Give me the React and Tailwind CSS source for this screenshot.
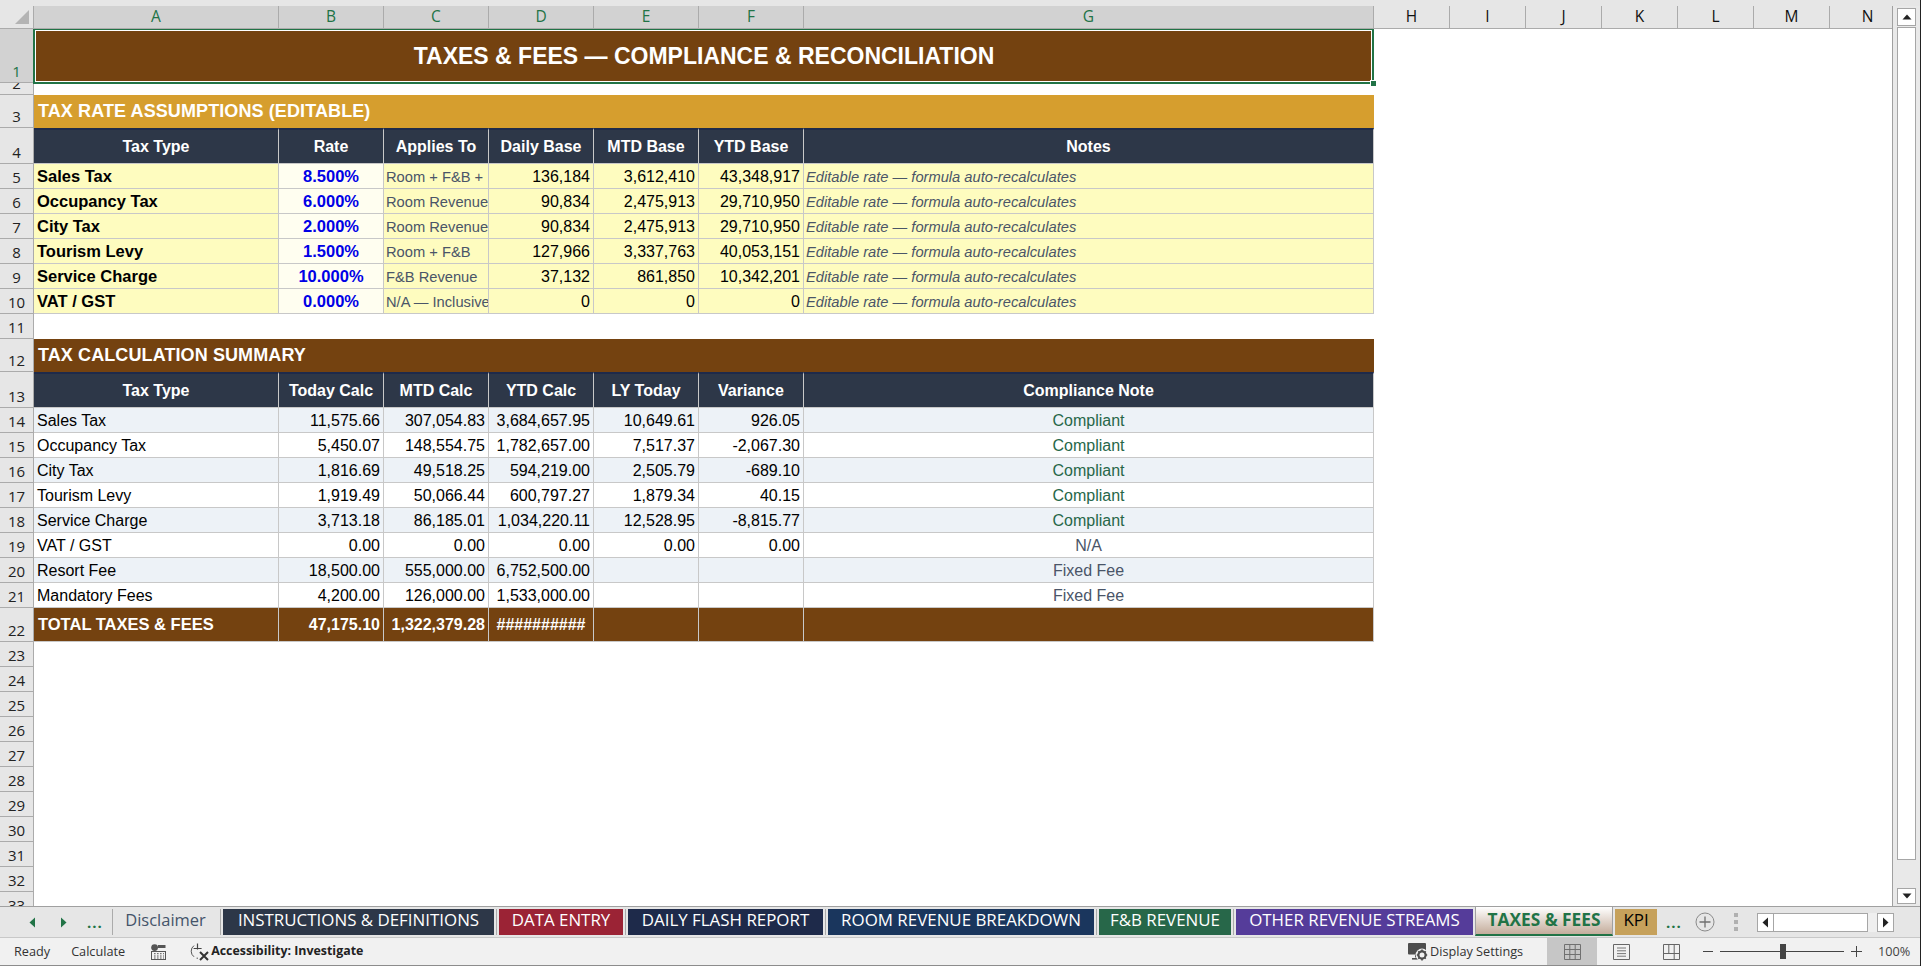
const hCols = ["H", "I", "J", "K", "L", "M", "N"]

const rates = [
  ["Sales Tax", "8.500%", "Room + F&B +", "136,184", "3,612,410", "43,348,917"],
  ["Occupancy Tax", "6.000%", "Room Revenue", "90,834", "2,475,913", "29,710,950"],
  ["City Tax", "2.000%", "Room Revenue", "90,834", "2,475,913", "29,710,950"],
  ["Tourism Levy", "1.500%", "Room + F&B", "127,966", "3,337,763", "40,053,151"],
  ["Service Charge", "10.000%", "F&B Revenue", "37,132", "861,850", "10,342,201"],
  ["VAT / GST", "0.000%", "N/A — Inclusive", "0", "0", "0"],
]

const calcs = [
  ["Sales Tax", "11,575.66", "307,054.83", "3,684,657.95", "10,649.61", "926.05", "Compliant"],
  ["Occupancy Tax", "5,450.07", "148,554.75", "1,782,657.00", "7,517.37", "-2,067.30", "Compliant"],
  ["City Tax", "1,816.69", "49,518.25", "594,219.00", "2,505.79", "-689.10", "Compliant"],
  ["Tourism Levy", "1,919.49", "50,066.44", "600,797.27", "1,879.34", "40.15", "Compliant"],
  ["Service Charge", "3,713.18", "86,185.01", "1,034,220.11", "12,528.95", "-8,815.77", "Compliant"],
  ["VAT / GST", "0.00", "0.00", "0.00", "0.00", "0.00", "N/A"],
  ["Resort Fee", "18,500.00", "555,000.00", "6,752,500.00", "", "", "Fixed Fee"],
  ["Mandatory Fees", "4,200.00", "126,000.00", "1,533,000.00", "", "", "Fixed Fee"],
]

const tabs = [
  ["INSTRUCTIONS & DEFINITIONS", "w-[271px] bg-[#2d3748] text-white"],
  ["DATA ENTRY", "w-[124px] bg-[#9b2335] text-white"],
  ["DAILY FLASH REPORT", "w-[195px] bg-[#1e2a4a] text-white"],
  ["ROOM REVENUE BREAKDOWN", "w-[266px] bg-[#1a365d] text-white"],
  ["F&B REVENUE", "w-[132px] bg-[#276749] text-white"],
  ["OTHER REVENUE STREAMS", "w-[237px] bg-[#553c9a] text-white"],
]

const RowNum = ({ n, active }) => (
  <div className={`w-[34px] shrink-0 h-full flex items-end justify-center overflow-hidden border-b border-r border-[#ababab] pb-[2px] text-[15px] leading-[18px] font-['Open_Sans',sans-serif] ${active ? "bg-[#d2d2d2] text-[#217346]" : "bg-[#e6e6e6] text-[#222]"}`}>
    {n}
  </div>
)

const ColA = "w-[245px]"
const ColN = "w-[105px]"
const ColG = "w-[570px]"

const Cell = ({ w, className = "", children }) => (
  <div className={`${w} shrink-0 h-full flex items-center overflow-hidden whitespace-nowrap border-r border-b border-[#c8c8c8] ${className}`}>
    {children}
  </div>
)

const Band = ({ n, h, bg, children }) => (
  <div className={`flex shrink-0 ${h}`}>
    <RowNum n={n} />
    <div className={`w-[1340px] flex items-center pl-[4px] ${bg} text-white font-bold text-[18px] tracking-[0.1px]`}>{children}</div>
  </div>
)

const HeadRow = ({ n, labels }) => (
  <div className="flex shrink-0 h-[36px]">
    <RowNum n={n} />
    {labels.map((l, i) => (
      <Cell key={l} w={i === 0 ? ColA : i === 6 ? ColG : ColN} className="justify-center bg-[#2d3748] text-white font-bold text-[16px] border-t-2 border-t-[#1e2a4a]">
        {l}
      </Cell>
    ))}
  </div>
)

const RateRow = ({ n, row }) => (
  <div className="flex shrink-0 h-[25px]">
    <RowNum n={n} />
    <Cell w={ColA} className="bg-[#fefcbf] pl-[3px] pt-[1px] font-bold text-[16.5px] text-black">{row[0]}</Cell>
    <Cell w={ColN} className="bg-[#fffef0] justify-center font-bold text-[16.5px] text-[#0000e6]">{row[1]}</Cell>
    <Cell w={ColN} className="bg-[#fefcbf] pl-[2px] pt-[2px] text-[14.7px] text-[#4a5568]">{row[2]}</Cell>
    {row.slice(3).map((v, i) => (
      <Cell key={i} w={ColN} className="bg-[#fefcbf] justify-end pr-[3px] pt-[1px] text-[16px] text-black">{v}</Cell>
    ))}
    <Cell w={ColG} className="bg-[#fefcbf] pl-[2px] pt-[2px] italic text-[14.7px] text-[#4a5568]">Editable rate — formula auto-recalculates</Cell>
  </div>
)

const CalcRow = ({ n, row }) => {
  const bg = n % 2 === 0 ? "bg-[#edf2f7]" : "bg-white"
  return (
    <div className="flex shrink-0 h-[25px]">
      <RowNum n={n} />
      <Cell w={ColA} className={`${bg} pl-[3px] pt-[2px] text-[16px] text-black`}>{row[0]}</Cell>
      {row.slice(1, 6).map((v, i) => (
        <Cell key={i} w={ColN} className={`${bg} justify-end pr-[3px] pt-[2px] text-[16px] text-black`}>{v}</Cell>
      ))}
      <Cell w={ColG} className={`${bg} justify-center pt-[2px] text-[16px] ${row[6] === "Compliant" ? "text-[#276749]" : "text-[#4a5568]"}`}>{row[6]}</Cell>
    </div>
  )
}

const TotalRow = () => (
  <div className="flex shrink-0 h-[34px]">
    <RowNum n={22} />
    <Cell w={ColA} className="bg-[#744210] pl-[4px] font-bold text-[16.5px] text-white">TOTAL TAXES &amp; FEES</Cell>
    <Cell w={ColN} className="bg-[#744210] justify-end pr-[3px] font-bold text-[16px] text-white">47,175.10</Cell>
    <Cell w={ColN} className="bg-[#744210] justify-end pr-[3px] font-bold text-[16px] text-white">1,322,379.28</Cell>
    <Cell w={ColN} className="bg-[#744210] justify-center font-bold text-[16px] text-white">##########</Cell>
    <Cell w={ColN} className="bg-[#744210]" />
    <Cell w={ColN} className="bg-[#744210]" />
    <Cell w={ColG} className="bg-[#744210]" />
  </div>
)

const EmptyRow = ({ n }) => (
  <div className="flex h-[25px] shrink-0">
    <RowNum n={n} />
  </div>
)

const ColHead = ({ w, label, active }) => (
  <div className={`${w} shrink-0 flex items-center justify-center border-r border-b border-[#ababab] text-[15.5px] font-['Open_Sans',sans-serif] ${active ? "bg-[#d2d2d2] text-[#217346]" : "bg-[#e6e6e6] text-[#111]"}`}>
    {label}
  </div>
)

const Tri = ({ dir, className = "" }) => (
  <svg width="7" height="11" viewBox="0 0 7 11" className={className}>
    <path d={dir === "l" ? "M6 0.5 L6 10.5 L0.5 5.5 Z" : "M1 0.5 L1 10.5 L6.5 5.5 Z"} fill="currentColor" />
  </svg>
)

const ScrollBtn = ({ children, className = "" }) => (
  <div className={`bg-white border border-[#a6a6a6] flex items-center justify-center text-[#222] ${className}`}>{children}</div>
)

const TabSep = () => (
  <div className="w-[5px] shrink-0 flex justify-center h-full">
    <div className="w-[1px] h-full bg-[#ababab]" />
  </div>
)

const MacroIcon = () => (
  <svg width="15" height="16" viewBox="0 0 15 16" className="block shrink-0">
    <circle cx="3.6" cy="3.6" r="3.4" fill="#555" />
    <rect x="7" y="1" width="7.5" height="3" fill="#555" />
    <rect x="0.5" y="7.5" width="14" height="8" fill="none" stroke="#555" />
    <path d="M3 9.7h1.6M6 9.7h1.6M9 9.7h1.6M12 9.7h1M3 12h1.6M6 12h1.6M9 12h1.6M12 12h1M3 14h1.6M6 14h1.6M9 14h1.6M12 14h1" stroke="#555" />
  </svg>
)

const A11yIcon = () => (
  <svg width="20" height="18" viewBox="0 0 20 18" className="block shrink-0">
    <path d="M5 2.6 A7 7 0 0 0 5 13.8" fill="none" stroke="#555" strokeWidth="1" />
    <path d="M9 15.2h-1.4" stroke="#555" />
    <path d="M8.5 0.5v6M4.6 5.5h8" stroke="#444" strokeWidth="1.2" fill="none" />
    <path d="M11 9 L19 17 M19 9 L11 17" stroke="#333" strokeWidth="2" />
  </svg>
)

const DisplayIcon = () => (
  <svg width="21" height="18" viewBox="0 0 21 18" className="block shrink-0">
    <rect x="0" y="0" width="18" height="11.5" rx="1" fill="#4d4d4d" />
    <path d="M7 11.5h3v3H7z" fill="#4d4d4d" />
    <path d="M4 15h6v1.6H4z" fill="#4d4d4d" />
    <circle cx="14" cy="12" r="6.4" fill="#f1f1f1" />
    <circle cx="14" cy="12" r="3.6" fill="none" stroke="#4d4d4d" strokeWidth="2.2" />
    <path d="M14 6.6v2M14 15.4v2M8.8 12h2M17.2 12h2M10.3 8.3l1.4 1.4M16.3 14.3l1.4 1.4M17.7 8.3l-1.4 1.4M11.7 14.3l-1.4 1.4" stroke="#4d4d4d" strokeWidth="1.6" />
  </svg>
)

export default function App() {
  return (
    <div className="w-[1921px] h-[966px] overflow-hidden flex flex-col bg-[#e6e6e6] font-['Liberation_Sans',Arial,sans-serif] border-r border-r-[#222]">
      <div className="h-[6px] shrink-0 bg-[#e6e6e6]" />

      <div className="flex h-[900px] shrink-0">
        <div className="w-[1893px] shrink-0 flex flex-col border-r border-[#a0a0a0]">
          <div className="flex h-[23px] shrink-0 bg-[#e6e6e6] overflow-hidden">
            <div className="w-[34px] shrink-0 flex items-end justify-end p-[3px] border-r border-b border-[#ababab]">
              <svg width="16" height="16" viewBox="0 0 16 16"><path d="M15 1 V15 H1 Z" fill="#b4b4b4" /></svg>
            </div>
            <ColHead w={ColA} label="A" active />
            {["B", "C", "D", "E", "F"].map((c) => <ColHead key={c} w={ColN} label={c} active />)}
            <ColHead w={ColG} label="G" active />
            {hCols.map((c) => <ColHead key={c} w="w-[76px]" label={c} />)}
          </div>

          <div className="relative h-[877px] bg-white overflow-hidden flex flex-col">
            <div className="flex shrink-0 h-[54px]">
              <RowNum n={1} active />
              <div className="w-[1340px] bg-[#744210] flex items-center justify-center text-white font-bold text-[23px]">
                TAXES &amp; FEES — COMPLIANCE &amp; RECONCILIATION
              </div>
            </div>
            <div className="flex shrink-0 h-[12px]"><RowNum n={2} /></div>
            <Band n={3} h="h-[33px]" bg="bg-[#d69e2e]">TAX RATE ASSUMPTIONS (EDITABLE)</Band>
            <HeadRow n={4} labels={["Tax Type", "Rate", "Applies To", "Daily Base", "MTD Base", "YTD Base", "Notes"]} />
            {rates.map((r, i) => <RateRow key={i} n={i + 5} row={r} />)}
            <EmptyRow n={11} />
            <Band n={12} h="h-[33px]" bg="bg-[#744210]">TAX CALCULATION SUMMARY</Band>
            <HeadRow n={13} labels={["Tax Type", "Today Calc", "MTD Calc", "YTD Calc", "LY Today", "Variance", "Compliance Note"]} />
            {calcs.map((r, i) => <CalcRow key={i} n={i + 14} row={r} />)}
            <TotalRow />
            {Array.from({ length: 11 }, (_, i) => <EmptyRow key={i} n={i + 23} />)}

            {/* selected merged cell */}
            <div className="absolute left-[33px] top-[-1px] w-[1341px] h-[56px] border-2 border-[#217346] outline outline-1 -outline-offset-3 outline-white pointer-events-none" />
            <div className="absolute left-[1370px] top-[51px] w-[7px] h-[7px] bg-[#217346] border border-white" />
          </div>
        </div>

        <div className="w-[27px] shrink-0 bg-[#e9e9e9] flex flex-col pt-[2px] pl-[4px]">
          <ScrollBtn className="w-[19px] h-[18px]">
            <svg width="10" height="6" viewBox="0 0 10 6"><path d="M0.5 5.5 L9.5 5.5 L5 0.5 Z" fill="#222" /></svg>
          </ScrollBtn>
          <div className="w-[19px] h-[833px] mt-[1px] bg-white border border-[#a6a6a6]" />
          <div className="h-[28px] shrink-0" />
          <ScrollBtn className="w-[19px] h-[16px]">
            <svg width="10" height="6" viewBox="0 0 10 6"><path d="M0.5 0.5 L9.5 0.5 L5 5.5 Z" fill="#222" /></svg>
          </ScrollBtn>
        </div>
      </div>

      <div className="h-[32px] shrink-0 flex items-stretch bg-[#e6e6e6] border-t border-[#a0a0a0] font-['Open_Sans',sans-serif] text-[16.9px] leading-none border-b border-b-[#c8c8c8]">
        <div className="w-[112px] shrink-0 flex items-center text-[#217346] pl-[29px]">
          <Tri dir="l" />
          <Tri dir="r" className="ml-[24px]" />
          <span className="ml-[20px] text-[15px] tracking-[1px] font-bold">...</span>
        </div>
        <div className="flex items-center h-[26px] mt-[2px]">
          <div className="w-[1px] h-[26px] bg-[#ababab]" />
          <div className="w-[105px] h-full flex items-center justify-center pb-[4px] text-[#44546a] text-[16.5px]">Disclaimer</div>
          <TabSep />
          {tabs.map(([t, cls], i) => (
            <div key={t} className="flex items-center h-full">
              <div className={`${cls} h-full flex items-center justify-center pb-[4px] whitespace-nowrap`}>{t}</div>
              {i < tabs.length - 1 && <TabSep />}
            </div>
          ))}
        </div>
        <div className="w-[138px] shrink-0 ml-[2px] -mt-[1px] h-[30px] pb-[2px] bg-gradient-to-b from-white to-[#c4ad9c] border-l border-r border-t border-[#a0a0a0] border-b-2 border-b-[#217346] flex items-center justify-center font-bold text-[#217346] text-[17.3px]">
          TAXES &amp; FEES
        </div>
        <div className="w-[42px] h-[26px] mt-[2px] ml-[2px] pb-[4px] bg-[#c6a15b] text-black flex items-center justify-center">KPI</div>
        <span className="ml-[9px] w-[29px] shrink-0 self-center text-[#217346] font-bold tracking-[1px] text-[15px]">...</span>
        <svg width="20" height="20" viewBox="0 0 20 20" className="self-center shrink-0">
          <circle cx="10" cy="10" r="9" fill="none" stroke="#8a8a8a" />
          <path d="M10 4.5v11M4.5 10h11" stroke="#707070" strokeWidth="1.3" />
        </svg>
        <div className="self-center flex flex-col gap-[3px] ml-[19px]">
          <div className="w-[4px] h-[4px] bg-[#b0b0b0]" />
          <div className="w-[4px] h-[4px] bg-[#b0b0b0]" />
          <div className="w-[4px] h-[4px] bg-[#b0b0b0]" />
        </div>
        <div className="self-center flex items-stretch h-[19px] ml-[19px]">
          <ScrollBtn className="w-[17px]"><Tri dir="l" /></ScrollBtn>
          <div className="w-[94px] bg-white border-y border-r border-[#a6a6a6]" />
          <div className="w-[9px] bg-[#efefef]" />
          <ScrollBtn className="w-[17px]"><Tri dir="r" /></ScrollBtn>
        </div>
      </div>

      <div className="h-[28px] shrink-0 flex items-center whitespace-nowrap bg-[#f1f1f1] border-b border-[#8c8c8c] font-['Open_Sans',sans-serif] text-[12.7px] text-[#333]">
        <span className="ml-[14px]">Ready</span>
        <span className="ml-[21px]">Calculate</span>
        <span className="ml-[26px]"><MacroIcon /></span>
        <span className="ml-[23px]"><A11yIcon /></span>
        <span className="ml-[2px] font-bold text-[12.4px] text-[#222]">Accessibility: Investigate</span>
        <div className="ml-auto w-[512px] shrink-0 flex items-center h-full">
          <DisplayIcon />
          <span className="ml-[1px] w-[92px] shrink-0">Display Settings</span>
          <div className="ml-[25px] w-[50px] shrink-0 h-full bg-[#c6c6c6] flex items-center justify-center">
            <svg width="17" height="16" viewBox="0 0 17 16"><path d="M0.5 0.5h16v15h-16zM0.5 5.5h16M0.5 10.5h16M5.8 0.5v15M11.2 0.5v15" fill="none" stroke="#707070" /></svg>
          </div>
          <div className="ml-[16px]">
            <svg width="17" height="16" viewBox="0 0 17 16" className="block"><path d="M0.5 0.5h16v15h-16z" fill="none" stroke="#666" /><path d="M4 4h9M4 6.8h9M4 9.6h9M4 12.2h9" stroke="#777" /></svg>
          </div>
          <div className="ml-[33px]">
            <svg width="17" height="16" viewBox="0 0 17 16" className="block"><path d="M0.5 0.5h16v15h-16zM0.5 9.5h16M5.8 0.5v9M11.2 0.5v15" fill="none" stroke="#666" /></svg>
          </div>
          <div className="ml-[23px] flex items-center">
            <div className="w-[10px] h-[1px] bg-[#444]" />
            <div className="relative w-[124px] h-[1px] bg-[#444] ml-[7px]">
              <div className="absolute left-[60px] -top-[7px] w-[6px] h-[15px] bg-[#444]" />
            </div>
            <svg width="11" height="11" viewBox="0 0 11 11" className="ml-[7px]"><path d="M5.5 0v11M0 5.5h11" stroke="#444" /></svg>
          </div>
          <span className="ml-[16px] text-[#444]">100%</span>
        </div>
      </div>
    </div>
  )
}
